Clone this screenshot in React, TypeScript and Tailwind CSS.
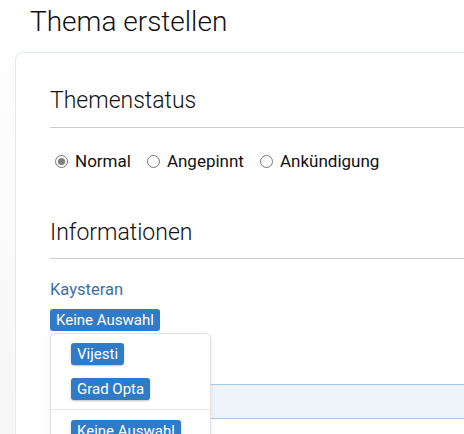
import React from "react";

function Radio({ checked, label }: { checked?: boolean; label: string }) {
  return (
    <label className="flex items-center">
      <span className="flex h-[13px] w-[13px] items-center justify-center rounded-full border border-[#767676] bg-white">
        {checked && <span className="h-[7px] w-[7px] rounded-full bg-[#7d7d7d]" />}
      </span>
      <span className="ml-[7px] text-[17px] leading-[20px] text-[#111]">{label}</span>
    </label>
  );
}

function Badge({ children, shadow }: { children: React.ReactNode; shadow?: boolean }) {
  return (
    <span
      className={
        "inline-block rounded-[3px] bg-[#2f7bc7] px-[6px] text-[15px] leading-[22px] text-white" +
        (shadow ? " shadow-[0_1px_2px_rgba(0,0,0,0.25)]" : "")
      }
    >
      {children}
    </span>
  );
}

export default function App() {
  return (
    <div
      className="h-[434px] w-[464px] overflow-hidden bg-gradient-to-b from-white to-[#f6f6f6]"
      style={{ fontFamily: "Roboto, 'Noto Sans', sans-serif" }}
    >
      <h1 className="pl-[30px] pt-[4px] text-[28px] font-light leading-[36px] text-[#111]">Thema erstellen</h1>
      <div className="ml-[15px] mt-[12px] w-[480px] rounded-tl-[8px] border border-[#e2e9f2] bg-white pb-[40px] pl-[34px] pt-[33px]">
        <h2 className="text-[23px] font-light leading-[30px] text-[#111]">Themenstatus</h2>
        <div className="mt-[11px] h-px bg-[#cccccc]" />
        <div className="mt-[23px] flex items-center gap-[16px] pl-[5px]">
          <Radio checked label="Normal" />
          <Radio label="Angepinnt" />
          <Radio label="Ankündigung" />
        </div>
        <h2 className="mt-[47px] text-[23px] font-light leading-[30px] text-[#111]">Informationen</h2>
        <div className="mt-[10px] h-px bg-[#cccccc]" />
        <div className="relative mt-[20px]">
          <div className="text-[16.5px] leading-[22px] text-[#3d6fa6]">Kaysteran</div>
          <div className="mt-[8px] flex">
            <Badge>Keine Auswahl</Badge>
          </div>
          <div className="mt-[53px] h-[35px] border-y border-[#a9c8e6] bg-[#eff4f9]" />
          <div className="absolute left-0 top-[54px] w-[161px] rounded-[4px] border border-[#e3e3e3] bg-white pt-[9px] shadow-[0_2px_6px_rgba(0,0,0,0.08)]">
            <div className="flex pl-[20px]">
              <Badge shadow>Vijesti</Badge>
            </div>
            <div className="mt-[13px] flex pl-[20px]">
              <Badge shadow>Grad Opta</Badge>
            </div>
            <div className="mt-[9px] h-px bg-[#e6e6e6]" />
            <div className="mt-[10px] flex pl-[20px]">
              <Badge shadow>Keine Auswahl</Badge>
            </div>
          </div>
        </div>
      </div>
    </div>
  );
}
